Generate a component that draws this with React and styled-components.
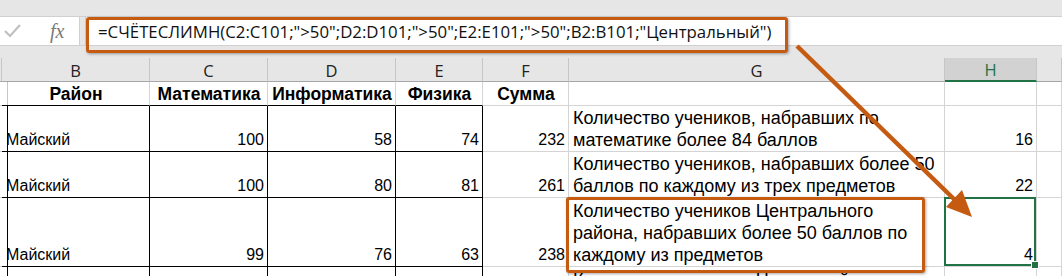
import React from 'react'
import styled, { createGlobalStyle } from 'styled-components'

const orange = '#c55a11'
const green = '#217346'
const grid = '#d4d4d4'
const ink = '#000'

const GlobalStyle = createGlobalStyle`
  html, body {
    margin: 0;
    padding: 0;
    background: #fff;
    overflow: hidden;
  }
  * { box-sizing: border-box; }
`

const Page = styled.div`
  position: relative;
  width: 1062px;
  height: 276px;
  overflow: hidden;
  background: #e6e6e6;
`

const Ribbon = styled.div`
  height: 17px;
  background: #e6e6e6;
  border-bottom: 1px solid #d0d0d0;
`

const FormulaBar = styled.div`
  display: flex;
  height: 29px;
  border-bottom: 1px solid #d0d0d0;
  background: #e6e6e6;
`

const IconBox = styled.div`
  width: 80px;
  background: #fff;
  display: flex;
  align-items: center;
  padding-left: 4px;
  gap: 28px;
  border-right: 1px solid #d0d0d0;
`

const Fx = styled.span`
  font-family: "Liberation Serif", serif;
  font-style: italic;
  font-size: 20px;
  color: #7a7a7a;
  padding-top: 1px;
`

const FormulaInput = styled.div`
  flex: 1;
  margin-left: 5px;
  background: #fff;
  border-left: 1px solid #d0d0d0;
  display: flex;
  align-items: center;
  padding-left: 12px;
  font-family: "Open Sans", sans-serif;
  font-size: 16.8px;
  color: #111;
  white-space: nowrap;
`

const Gap = styled.div`
  height: 12px;
`

const Sheet = styled.div`
  display: grid;
  grid-template-columns: 2px 148px 118px 128px 87px 86px 376px 92px 25px;
  grid-template-rows: 24px 24px 46px 46px 69px 40px;
  background: #fff;
`

const ColHead = styled.div`
  background: ${p => (p.$active ? '#d2d2d2' : '#e6e6e6')};
  border-right: 1px solid #c6c6c6;
  border-bottom: ${p => (p.$active ? `2px solid ${green}` : '1px solid #a6a6a6')};
  display: flex;
  align-items: center;
  justify-content: center;
  font-family: "Open Sans", sans-serif;
  font-size: 16.5px;
  color: ${p => (p.$active ? green : '#222')};
  padding-top: 1px;
`

const Cell = styled.div`
  position: relative;
  display: flex;
  flex-direction: column;
  justify-content: ${p => (p.$top ? 'flex-start' : 'flex-end')};
  align-items: ${p => p.$align || 'flex-start'};
  text-align: ${p => (p.$align === 'center' ? 'center' : 'left')};
  padding: ${p => (p.$top ? '2px 4px 0' : '0 3px 0 4px')};
  border-right: 1px solid ${p => p.$rc || grid};
  border-bottom: 1px solid ${p => p.$bc || grid};
  font-family: "Liberation Sans", Arial, sans-serif;
  font-size: ${p => p.$size || 16}px;
  font-weight: ${p => (p.$bold ? 700 : 400)};
  line-height: 22px;
  color: #000;
  white-space: nowrap;
  ${p => p.$selected && `
    &::after {
      content: '';
      position: absolute;
      left: -1px;
      top: -1px;
      right: 0;
      bottom: 0;
      border: 2px solid ${green};
    }
    &::before {
      content: '';
      position: absolute;
      right: -3px;
      bottom: -3px;
      width: 6px;
      height: 6px;
      background: ${green};
      border: 1px solid #fff;
      z-index: 1;
    }
  `}
`

const Callout = styled.div`
  position: absolute;
  border: 3px solid ${orange};
  border-radius: 3px;
  box-shadow: 1px 1px 3px rgba(0, 0, 0, 0.35);
  pointer-events: none;
`

const Overlay = styled.svg`
  position: absolute;
  left: 0;
  top: 0;
  pointer-events: none;
`

const letters = ['', 'B', 'C', 'D', 'E', 'F', 'G', 'H', '']

const rows = [
  { head: true, cells: ['Район', 'Математика', 'Информатика', 'Физика', 'Сумма'] },
  { cells: ['Майский', '100', '58', '74', '232'], text: ['Количество учеников, набравших по', 'математике более 84 баллов'], res: '16' },
  { cells: ['Майский', '100', '80', '81', '261'], text: ['Количество учеников, набравших более 50', 'баллов по каждому из трех предметов'], res: '22' },
  { cells: ['Майский', '99', '76', '63', '238'], text: ['Количество учеников Центрального', 'района, набравших более 50 баллов по', 'каждому из предметов'], res: '4', selected: true },
  { cells: ['', '', '', '', ''], text: ['Количество учеников Нового района'], top: true },
]

function Lines({ lines }) {
  return lines.map((l, i) => <span key={i}>{l}</span>)
}

export default function App() {
  return (
    <>
      <GlobalStyle />
      <Page>
        <Ribbon />
        <FormulaBar>
          <IconBox>
            <svg width="18" height="14" viewBox="0 0 18 14">
              <polyline points="1,7 6,12 16,1" fill="none" stroke="#c0c0c0" strokeWidth="2.2" />
            </svg>
            <Fx>fx</Fx>
          </IconBox>
          <FormulaInput>
            =СЧЁТЕСЛИМН(C2:C101;"&gt;50";D2:D101;"&gt;50";E2:E101;"&gt;50";B2:B101;"Центральный")
          </FormulaInput>
        </FormulaBar>
        <Gap />
        <Sheet>
          {letters.map((l, i) => (
            <ColHead key={i} $active={l === 'H'}>{l}</ColHead>
          ))}
          {rows.map((r, ri) => {
            const dark = !r.head
            return (
              <React.Fragment key={ri}>
                <Cell $rc={dark ? ink : '#c6c6c6'} />
                {r.cells.map((c, ci) => (
                  <Cell
                    key={ci}
                    $rc={dark && ci < 4 ? ink : grid}
                    $bc={ci < 4 ? ink : grid}
                    $align={r.head ? 'center' : ci === 0 ? 'flex-start' : 'flex-end'}
                    $bold={r.head}
                    $size={r.head ? 17.5 : 16}
                  >
                    {c}
                  </Cell>
                ))}
                <Cell $top={r.top} $size={18}>{r.text && <Lines lines={r.text} />}</Cell>
                <Cell $align="flex-end" $selected={r.selected}>{r.res}</Cell>
                <Cell />
              </React.Fragment>
            )
          })}
        </Sheet>

        <Callout style={{ left: 86, top: 17, width: 702, height: 36 }} />
        <Callout style={{ left: 566, top: 197, width: 359, height: 76 }} />
        <Overlay width="1062" height="276" viewBox="0 0 1062 276">
          <line x1="797" y1="46" x2="958" y2="203" stroke={orange} strokeWidth="4.5" />
          <polygon points="972,217 946,207 962,190" fill={orange} />
        </Overlay>
      </Page>
    </>
  )
}
